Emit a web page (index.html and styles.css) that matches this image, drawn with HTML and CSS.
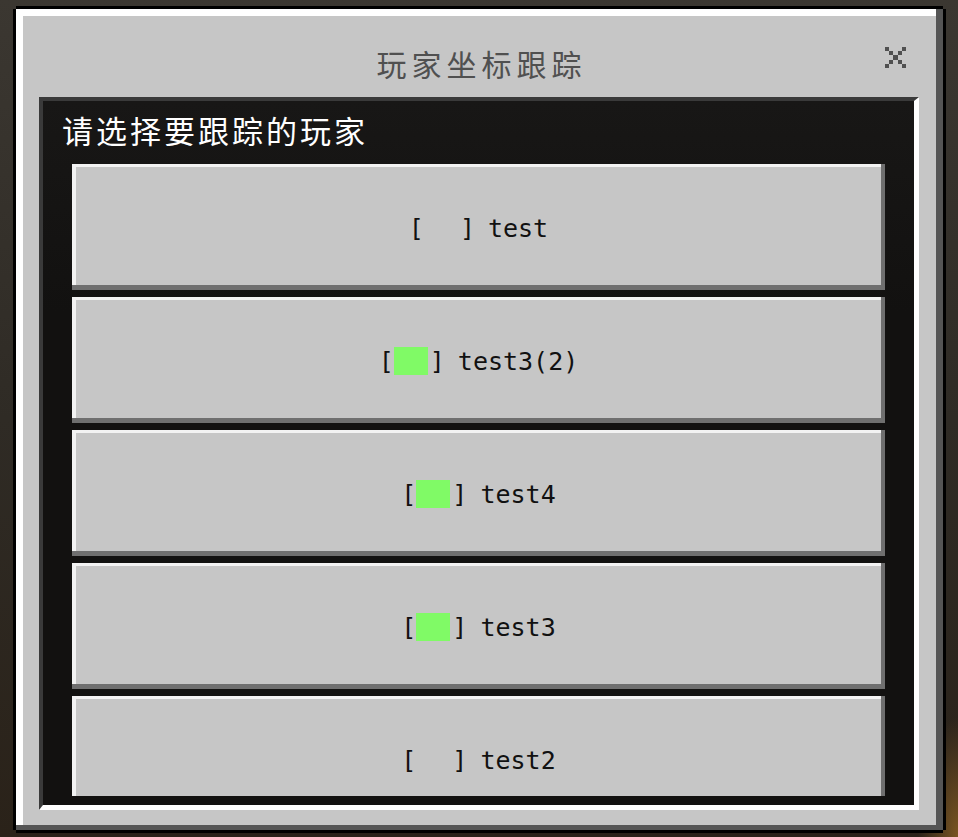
FILE: index.html
```html
<!DOCTYPE html>
<html lang="zh-CN">
<head>
<meta charset="utf-8">
<title>玩家坐标跟踪</title>
<link rel="stylesheet" href="styles.css">
</head>
<body>
<div class="frame">
  <div class="panel">
    <div class="header">
      <h1 class="title">玩家坐标跟踪</h1>
      <button class="close" aria-label="关闭">
        <svg width="21" height="21" viewBox="0 0 5 5" shape-rendering="crispEdges">
          <g fill="#505050">
            <rect x="0" y="0" width="1" height="1"/><rect x="4" y="0" width="1" height="1"/>
            <rect x="1" y="1" width="1" height="1"/><rect x="3" y="1" width="1" height="1"/>
            <rect x="2" y="2" width="1" height="1"/>
            <rect x="1" y="3" width="1" height="1"/><rect x="3" y="3" width="1" height="1"/>
            <rect x="0" y="4" width="1" height="1"/><rect x="4" y="4" width="1" height="1"/>
          </g>
        </svg>
      </button>
    </div>
    <div class="inner">
      <div class="subtitle">请选择要跟踪的玩家</div>
      <div class="list">
        <button class="item"><span class="br">[</span><span class="sq"></span><span class="br">]</span><span class="name">test</span></button>
        <button class="item"><span class="br">[</span><span class="sq on"></span><span class="br">]</span><span class="name">test3(2)</span></button>
        <button class="item"><span class="br">[</span><span class="sq on"></span><span class="br">]</span><span class="name">test4</span></button>
        <button class="item"><span class="br">[</span><span class="sq on"></span><span class="br">]</span><span class="name">test3</span></button>
        <button class="item"><span class="br">[</span><span class="sq"></span><span class="br">]</span><span class="name">test2</span></button>
      </div>
    </div>
  </div>
</div>
</body>
</html>
```

FILE: styles.css
```css
html, body {
  margin: 0;
  padding: 0;
}
body {
  width: 958px;
  height: 837px;
  overflow: hidden;
  background:
    radial-gradient(ellipse 40px 120px at 100% 100%, #7a5522 0%, rgba(122,85,34,0) 100%),
    linear-gradient(180deg, #3b3731 0%, #2f2b25 50%, #2a2219 100%);
  font-family: "Noto Sans CJK SC", sans-serif;
}
.frame {
  box-sizing: border-box;
  margin: 6px 0 0 13px;
  width: 933px;
  height: 827px;
  padding: 3px;
  background: #000;
  clip-path: polygon(3px 0, calc(100% - 3px) 0, calc(100% - 3px) 3px, 100% 3px, 100% calc(100% - 3px), calc(100% - 3px) calc(100% - 3px), calc(100% - 3px) 100%, 3px 100%, 3px calc(100% - 3px), 0 calc(100% - 3px), 0 3px, 3px 3px);
}
.panel {
  position: relative;
  box-sizing: border-box;
  height: 100%;
  background: #c6c6c6;
  box-shadow: inset -7px -5px 0 #555555, inset 7px 7px 0 #ffffff;
  padding: 0 24px 20px 23px;
  display: flex;
  flex-direction: column;
}
.header {
  box-sizing: border-box;
  height: 88px;
  padding-top: 20px;
  display: flex;
  align-items: center;
  justify-content: center;
}
.title {
  margin: 0 -5px 0 0;
  font: 400 30px/1 "Noto Sans CJK SC", sans-serif;
  letter-spacing: 5px;
  color: #505050;
}
.close {
  position: absolute;
  top: 38px;
  right: 37px;
  width: 21px;
  height: 21px;
  padding: 0;
  border: 0;
  background: none;
  display: block;
}
.close svg {
  display: block;
}
.inner {
  flex: 1;
  min-height: 0;
  background: linear-gradient(180deg, #181716 0%, #121110 30%, #121110 100%);
  border-style: solid;
  border-width: 4px 5px 5px 4px;
  border-color: #3a3a3a #ffffff #ffffff #3a3a3a;
  display: flex;
  flex-direction: column;
}
.subtitle {
  color: #ffffff;
  font: 400 31px/44px "Noto Sans CJK SC", sans-serif;
  letter-spacing: 3px;
  padding: 7px 0 0 19px;
  margin-bottom: 12px;
}
.list {
  flex: 1;
  min-height: 0;
  overflow: hidden;
  display: flex;
  flex-direction: column;
  gap: 7px;
  padding: 0 29px;
  margin-bottom: 9px;
}
.item {
  flex: 0 0 126px;
  height: 126px;
  margin: 0;
  padding: 2px 0 0 0;
  border: 0;
  background: #c6c6c6;
  box-shadow: inset -4px -5px 0 #6f6f6f, inset 4px 3px 0 #f2f2f2;
  display: flex;
  align-items: center;
  justify-content: center;
  font: 400 25px/1 "DejaVu Sans Mono", monospace;
  color: #111111;
}
.br {
  display: inline-block;
}
.sq {
  display: inline-block;
  width: 34px;
  height: 28px;
  margin: 0 2px 0 0;
}
.sq.on {
  background: #80fa66;
}
.name {
  margin-left: 13px;
}
```
